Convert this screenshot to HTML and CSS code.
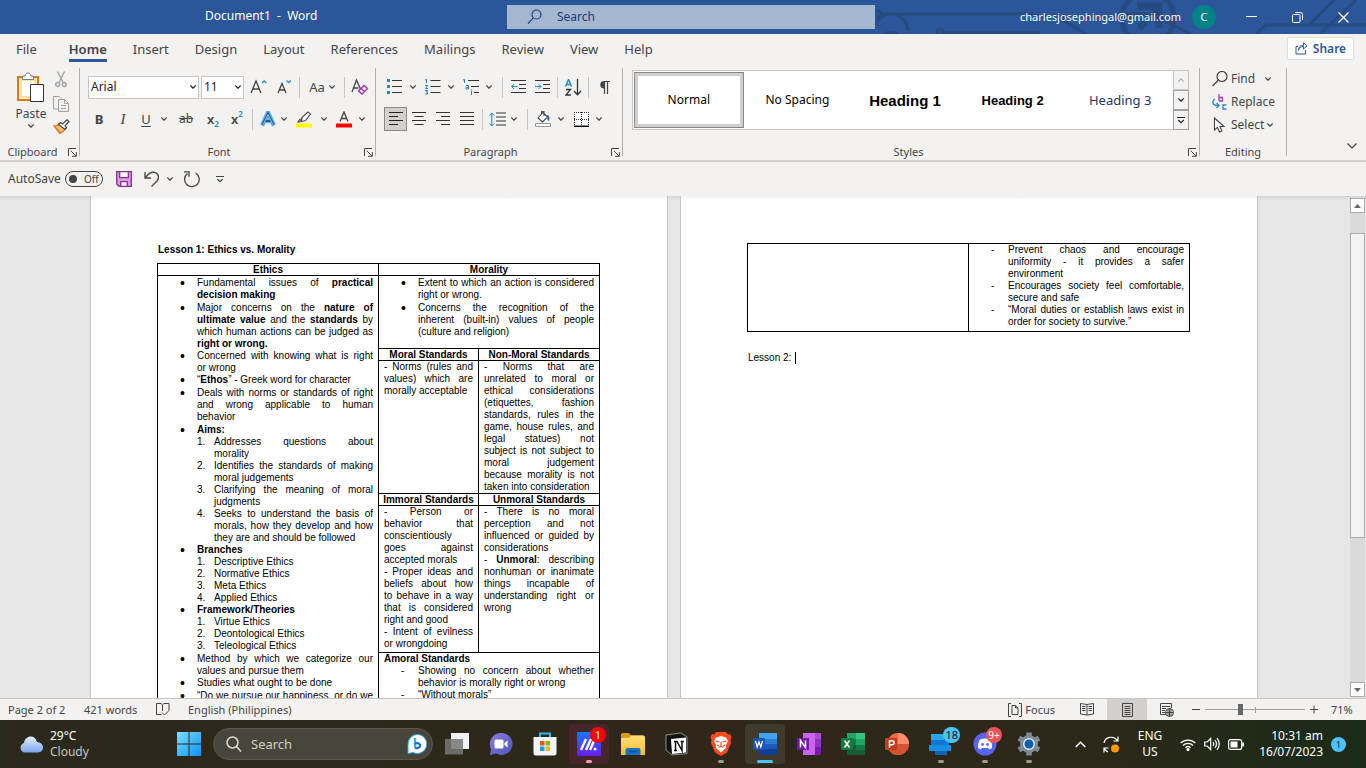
FILE: index.html
```html
<!DOCTYPE html>
<html lang="en">
<head>
<meta charset="utf-8">
<title>Document1 - Word</title>
<link rel="stylesheet" href="styles.css">
</head>
<body>
<svg class="defs" width="0" height="0" aria-hidden="true">
  <symbol id="chev" viewBox="0 0 6 4"><path d="M.3.5 3 3.2 5.7.5" fill="none" stroke="currentColor" stroke-width="1.2"/></symbol>
  <symbol id="launch" viewBox="0 0 9 9"><path d="M.5 8V.5H8M3 3l5 5M8.300 4v4.300H4" fill="none" stroke="currentColor"/></symbol>
  <linearGradient id="gWin" x1="0" y1="0" x2="1" y2="1"><stop offset="0" stop-color="#7fe0ff"/><stop offset="1" stop-color="#0a90f5"/></linearGradient>
  <linearGradient id="gCloud" x1="0" y1="0" x2="0" y2="1"><stop offset="0" stop-color="#e3ecfb"/><stop offset="1" stop-color="#7ba6ec"/></linearGradient>
  <linearGradient id="gFold" x1="0" y1="0" x2="0" y2="1"><stop offset="0" stop-color="#ffe07c"/><stop offset="1" stop-color="#f8bd2a"/></linearGradient>
  <linearGradient id="gChat" x1="0" y1="0" x2="1" y2="1"><stop offset="0" stop-color="#8d7be0"/><stop offset="1" stop-color="#4a56b8"/></linearGradient>
  <linearGradient id="gMu" x1="0" y1="0" x2="0" y2="1"><stop offset="0" stop-color="#1976ff"/><stop offset="1" stop-color="#6a1cf0"/></linearGradient>
</svg>

<header class="titlebar">
  <svg class="circuit" width="490" height="34" viewBox="0 0 490 34" fill="none" stroke="#264b80" stroke-width="3" aria-hidden="true">
    <path d="M4 14h150l12 3h110M68 33h96M32 31a17 17 0 0 0-34 0M8 33h14M176 14l34 20M250 14h25l40 20M380 34l10-9h100M444 34l36-34M434 24l24-24"/><circle cx="2" cy="14" r="3"/><circle cx="64" cy="32" r="3"/><circle cx="272" cy="18" r="26" stroke-width="5"/><path d="M261 6h22v22M263 28l18-18" stroke-width="7"/>
  </svg>
  <h1 class="doc-title">Document1&nbsp; -&nbsp; Word</h1>
  <label class="top-search">
    <svg width="16" height="16" viewBox="0 0 16 16" fill="none" stroke="#1d437c" stroke-width="1.200"><circle cx="9.500" cy="5.500" r="4.500"/><path d="M6.300 8.800 1 14.500"/></svg>
    <input type="search" placeholder="Search" aria-label="Search">
  </label>
  <div class="account"><span>charlesjosephingal@gmail.com</span><span class="avatar">C</span></div>
  <div class="win-buttons">
    <button aria-label="Minimize"><svg width="11" height="11" viewBox="0 0 11 11"><path d="M0 4.500h11" stroke="#fff"/></svg></button>
    <button aria-label="Restore"><svg width="11" height="11" viewBox="0 0 11 11" fill="none" stroke="#fff"><rect x=".5" y="2.500" width="7.500" height="8" rx="1"/><path d="M3 .5h5.500a2 2 0 0 1 2 2V8"/></svg></button>
    <button aria-label="Close"><svg width="11" height="11" viewBox="0 0 11 11" stroke="#fff" stroke-width="1.200"><path d="m.5.5 10 10m0-10-10 10"/></svg></button>
  </div>
</header>

<nav class="tabs">
  <button class="t-file">File</button><button class="on">Home</button><button>Insert</button><button>Design</button><button>Layout</button><button>References</button><button>Mailings</button><button>Review</button><button>View</button><button>Help</button>
  <button class="share"><svg width="13" height="13" viewBox="0 0 13 13" fill="none" stroke="#2b579a"><path d="M3 4.500H1v7.500h9.500V8M3.500 8.500C4 5.500 6 4.500 8.500 4.500V7L12 3.700 8.500.8v2.500C5 3.300 3.500 5.500 3.500 8.500z"/></svg>Share</button>
</nav>

<section class="ribbon">
  <div class="group g-clip">
    <div class="clip-body">
      <button class="paste">
        <svg width="28" height="32" viewBox="0 0 28 32"><path d="M1 5h20v23H1z" fill="#fff" stroke="#e07a10" stroke-width="2"/><path d="M2.500 6.500h17v20h-17z" fill="#fbe3a0"/><path d="M5 9h12v15H5z" fill="#fff"/><path d="M5.500 7.500V4H8c0-4 6-4 6 0h2.500v3.500z" fill="#fff" stroke="#777"/><path d="M13.500 12.500h13v17h-13z" fill="#fff" stroke="#333"/></svg>
        <span>Paste</span><svg width="6" height="4"><use href="#chev"/></svg>
      </button>
      <div class="clip-side">
        <button aria-label="Cut"><svg width="12" height="17" viewBox="0 0 12 17" fill="none" stroke="#a0a0a0" stroke-width="1.300"><path d="m2.500.5 5.500 11M9.500.5 4 11.500"/><circle cx="2.700" cy="13.500" r="2"/><circle cx="9.300" cy="13.500" r="2"/></svg></button>
        <button aria-label="Copy"><svg width="16" height="16" viewBox="0 0 16 16" fill="none" stroke="#a0a0a0"><path d="M5 13H.5V.5h5.500l2 2M5.500 3.500h6l4 4v8h-10zM11.500 3.500v4h4M8 9.500h5M8 12.500h5"/></svg></button>
        <button aria-label="Format Painter"><svg width="17" height="15" viewBox="0 0 17 15"><path d="M1 7c3 0 4-.5 5-2l6 5c-1 2-3 3.500-5 4.500z" fill="#f8c27a" stroke="#e07a10" stroke-width="1.300"/><path d="M5.500 5.500 7.500 3.500 9.500 5 14 .8l2 1.700L12 7l1.500 1.700L12 10.500z" fill="#fff" stroke="#444" stroke-width="1.200"/><path d="m3 9 5 4" stroke="#e07a10"/></svg></button>
      </div>
    </div>
    <div class="g-label"><span>Clipboard</span><button aria-label="Clipboard settings"><svg width="9" height="9"><use href="#launch"/></svg></button></div>
  </div>

  <div class="group g-font">
    <div class="row top">
      <div class="combo c-font"><select aria-label="Font"><option>Arial</option></select><svg width="6" height="4"><use href="#chev"/></svg></div>
      <div class="combo c-size"><select aria-label="Font size"><option>11</option></select><svg width="6" height="4"><use href="#chev"/></svg></div>
      <button class="w26" aria-label="Grow font"><svg width="18" height="18" viewBox="0 0 18 18" fill="none" stroke="#444" stroke-width="1.300"><path d="M1 15 6 3l5 12M3 11h6"/><path d="m12 5 2.200-2.200L16.400 5" stroke="#1f86cf"/></svg></button>
      <button class="w24" aria-label="Shrink font"><svg width="16" height="18" viewBox="0 0 16 18" fill="none" stroke="#444" stroke-width="1.300"><path d="m2 15 4-9.500L10 15M3.500 12h5"/><path d="m10.500 2.500 2.200 2.200 2.200-2.200" stroke="#1f86cf"/></svg></button>
      <i class="sep"></i>
      <button class="w38 aa">Aa<svg width="6" height="4"><use href="#chev"/></svg></button>
      <i class="sep"></i>
      <button class="w24" aria-label="Clear formatting"><svg width="18" height="18" viewBox="0 0 18 18" fill="none" stroke="#444" stroke-width="1.300"><path d="M1 14 5.500 2l4 9M2.500 10h5"/><path d="m7.500 13 5.500-5.500 3.500 3L11 16zM10 10.500l3.500 3" stroke="#9b2fae" fill="#f6e8f8"/></svg></button>
    </div>
    <div class="row">
      <button class="w24 b">B</button><button class="w24 i">I</button><button class="w22 u">U</button><button class="w14" aria-label="Underline style"><svg width="6" height="4"><use href="#chev"/></svg></button>
      <button class="w30 s">ab</button><button class="w24 x">x<sub>2</sub></button><button class="w24 x">x<sup>2</sup></button>
      <i class="sep"></i>
      <button class="w24" aria-label="Text effects"><svg width="16" height="16" viewBox="0 0 16 16" fill="none"><path d="M2 14.500 8 1.500l6 13M4.500 10h7" stroke="#6cb4ea" stroke-width="4.500"/><path d="M2.500 14 8 2.500 13.500 14M5 10h6" stroke="#12609f" stroke-width="2.200"/><path d="M3 14 8 3.500 13 14" stroke="#fff" stroke-width=".6"/></svg></button>
      <button class="w12 nl" aria-label="Text effects menu"><svg width="6" height="4"><use href="#chev"/></svg></button>
      <button class="w28" aria-label="Highlight"><svg width="16" height="17" viewBox="0 0 16 17"><path d="M0 12.500h16v4H0z" fill="#ffff00"/><path d="m6 6.500 6-5.500 2.500 2-5 6.500-4 1zM5.500 7 4 11H2l2-3" fill="#fff" stroke="#555" stroke-width="1.200"/></svg></button>
      <button class="w12" aria-label="Highlight colour"><svg width="6" height="4"><use href="#chev"/></svg></button>
      <button class="w28" aria-label="Font colour"><svg width="16" height="17" viewBox="0 0 16 17"><path d="M0 12.500h16v4H0z" fill="#f00"/><path d="M4 10.500 8 1l4 9.500M5.500 7.500h5" fill="none" stroke="#444" stroke-width="1.300"/></svg></button>
      <button class="w12 nl" aria-label="Font colour menu"><svg width="6" height="4"><use href="#chev"/></svg></button>
    </div>
    <div class="g-label"><span>Font</span><button aria-label="Font settings"><svg width="9" height="9"><use href="#launch"/></svg></button></div>
  </div>

  <div class="group g-para">
    <div class="row top">
      <button class="w24" aria-label="Bullets"><svg width="16" height="16" viewBox="0 0 16 16"><path d="M0 0h3v3H0zM0 6h3v3H0zM0 12h3v3H0z" fill="#1f86cf"/><path d="M5 1.500h10M5 7.500h10M5 13.500h10" stroke="#333"/></svg></button>
      <button class="w12" aria-label="Bullet menu"><svg width="6" height="4"><use href="#chev"/></svg></button>
      <button class="w28" aria-label="Numbering"><svg width="16" height="16" viewBox="0 0 16 16" fill="none"><path d="M0 1l1.500-.6V4M0 6.500h2.500L.5 9.500H3M0 11.500h2.500L1.200 13h1.300v2H0" stroke="#1f86cf"/><path d="M5.500 1.500h10M5.500 7.500h10M5.500 13.500h10" stroke="#333"/></svg></button>
      <button class="w12 nl" aria-label="Numbering menu"><svg width="6" height="4"><use href="#chev"/></svg></button>
      <button class="w28" aria-label="Multilevel list"><svg width="16" height="16" viewBox="0 0 16 16" fill="none"><path d="M0 1l1.500-.6V4M3 6.500h2.500V10H3V8.300h2.500M8.500 12v4M8.500 10.500v1" stroke="#1f86cf"/><path d="M5 1.500h11M8 7.500h8M11 13.500h5" stroke="#333"/></svg></button>
      <button class="w12 nl" aria-label="Multilevel menu"><svg width="6" height="4"><use href="#chev"/></svg></button>
      <i class="sep wide"></i>
      <button class="w24" aria-label="Decrease indent"><svg width="15" height="14" viewBox="0 0 15 14" fill="none"><path d="M0 .5h15M8 4.500h7M8 8.500h7M0 12.500h15" stroke="#333"/><path d="M6.500 6.500h-6M3 4 .7 6.500 3 9" stroke="#1f86cf"/></svg></button>
      <button class="w24" aria-label="Increase indent"><svg width="15" height="14" viewBox="0 0 15 14" fill="none"><path d="M0 .5h15M8 4.500h7M8 8.500h7M0 12.500h15" stroke="#333"/><path d="M0 6.500h6M3.500 4 6 6.500 3.500 9" stroke="#1f86cf"/></svg></button>
      <i class="sep"></i>
      <button class="w24" aria-label="Sort"><svg width="17" height="17" viewBox="0 0 17 17" fill="none"><path d="M.5 7.500 3.500.5l3 7M1.500 5.500h4" stroke="#1f86cf" stroke-width="1.400"/><path d="M1 10.500h4.500L1 16h5M12.500 0v15.500M9 12l3.500 3.800L16 12" stroke="#333" stroke-width="1.300"/></svg></button>
      <i class="sep"></i>
      <button class="w24" aria-label="Show marks"><svg width="11" height="13" viewBox="0 0 11 13"><path d="M5 .5h6M5.500 0v13M8.500 0v13" stroke="#444" stroke-width="1.200"/><path d="M5 0a3.700 3.700 0 0 0 0 7.500z" fill="#444"/></svg></button>
    </div>
    <div class="row">
      <button class="pressed" aria-label="Align left"><svg width="14" height="14" viewBox="0 0 14 14"><path d="M0 .5h14M0 4.500h9M0 8.500h14M0 12.500h9" stroke="#222"/></svg></button>
      <button class="w24" aria-label="Center"><svg width="14" height="14" viewBox="0 0 14 14"><path d="M0 .5h14M2.500 4.500h9M0 8.500h14M2.500 12.500h9" stroke="#333"/></svg></button>
      <button class="w24" aria-label="Align right"><svg width="14" height="14" viewBox="0 0 14 14"><path d="M0 .5h14M5 4.500h9M0 8.500h14M5 12.500h9" stroke="#333"/></svg></button>
      <button class="w24" aria-label="Justify"><svg width="14" height="14" viewBox="0 0 14 14"><path d="M0 .5h14M0 4.500h14M0 8.500h14M0 12.500h14" stroke="#333"/></svg></button>
      <i class="sep"></i>
      <button class="w22" aria-label="Line spacing"><svg width="17" height="15" viewBox="0 0 17 15" fill="none"><path d="M7 1h10M7 5h10M7 9h10M7 13h10" stroke="#333"/><path d="M2.800 1v13M.5 3.500 2.800 1l2.300 2.500M.5 11.500 2.800 14l2.300-2.500" stroke="#1f86cf"/></svg></button>
      <button class="w12" aria-label="Line spacing menu"><svg width="6" height="4"><use href="#chev"/></svg></button>
      <i class="sep wide"></i>
      <button class="w24" aria-label="Shading"><svg width="16" height="16" viewBox="0 0 16 16"><path d="M.5 12.500h15v3H.5z" fill="#fff" stroke="#999"/><path d="m3 7 5-5.500 4.500 4.500-5 5zM6.500 3V.8c0-1 2.500-1 2.500 0V5" fill="#fff" stroke="#444" stroke-width="1.100"/><path d="M11.500 4c3 0 3.500 2 2.500 6-1.500-.5-2-2-1.500-3.500z" fill="#1f6db5"/></svg></button>
      <button class="w12" aria-label="Shading menu"><svg width="6" height="4"><use href="#chev"/></svg></button>
      <button class="w28" aria-label="Borders"><svg width="15" height="15" viewBox="0 0 15 15"><path d="M0 0h15v15H0z" fill="#fff"/><path d="M0 .5h15M.5 0v14M14.500 0v14M7.500 0v14M0 7.500h15" stroke="#333" stroke-dasharray="1 1"/><path d="M0 14.300h15" stroke="#000" stroke-width="1.500"/></svg></button>
      <button class="w12 nl" aria-label="Borders menu"><svg width="6" height="4"><use href="#chev"/></svg></button>
    </div>
    <div class="g-label"><span>Paragraph</span><button aria-label="Paragraph settings"><svg width="9" height="9"><use href="#launch"/></svg></button></div>
  </div>

  <div class="group g-styles">
    <div class="gallery">
      <button class="cell sel">Normal</button><button class="cell">No Spacing</button><button class="cell h1s">Heading 1</button><button class="cell h2s">Heading 2</button><button class="cell h3s">Heading 3</button>
      <div class="g-scroll">
        <button class="off" aria-label="Previous styles"><svg class="flip" width="6" height="4"><use href="#chev"/></svg></button>
        <button aria-label="Next styles"><svg width="6" height="4"><use href="#chev"/></svg></button>
        <button aria-label="More styles"><svg width="8" height="7" viewBox="0 0 8 7"><path d="M0 .5h8M1.300 3 4 5.700 6.700 3" fill="none" stroke="#222" stroke-width="1.200"/></svg></button>
      </div>
    </div>
    <div class="g-label"><span>Styles</span><button aria-label="Styles settings"><svg width="9" height="9"><use href="#launch"/></svg></button></div>
  </div>

  <div class="group g-edit">
    <div class="edit-body">
      <button><svg width="16" height="16" viewBox="0 0 16 16" fill="none" stroke="#444" stroke-width="1.200"><circle cx="10" cy="5.500" r="5"/><path d="M6.500 9 .5 15"/></svg><span class="find">Find</span><svg width="6" height="4"><use href="#chev"/></svg></button>
      <button><svg width="16" height="16" viewBox="0 0 16 16" fill="none" stroke-width="1.300"><path d="M7 0v7M7 3.500h3.500V7H7" stroke="#a33bb5"/><path d="M3 5C-.5 7 0 11.500 6 11.500M4.500 9 7 11.500 4.500 14M14.500 11H11v4h3.500" stroke="#1f86cf"/></svg><span>Replace</span></button>
      <button><svg width="16" height="16" viewBox="0 0 16 16" fill="#fff" stroke="#444" stroke-width="1.100"><path d="M2.500 1v12l3-2.700 2 4.700 2.300-1L8 9.500h4z"/></svg><span>Select</span><svg width="6" height="4"><use href="#chev"/></svg></button>
    </div>
    <div class="g-label"><span>Editing</span></div>
  </div>
  <button class="collapse" aria-label="Collapse ribbon"><svg width="10" height="6" viewBox="0 0 10 6"><path d="m.5.5 4.500 4.500L9.500.5" fill="none" stroke="#444" stroke-width="1.200"/></svg></button>
</section>

<section class="qat">
  <label class="autosave">AutoSave <span class="toggle"><input type="checkbox"><span>Off</span></span></label>
  <button class="w28 q-save" aria-label="Save"><svg width="16" height="16" viewBox="0 0 16 16" fill="#fff" stroke="#8a2a9b" stroke-width="1.300"><path d="M.7.7h14.600v14.600H3L.7 13z" fill="#d9a0e0"/><path d="M3.700.7h8.600v6H3.700zM4.700 15.300v-4.600h6.600v4.600z"/></svg></button>
  <button class="w28" aria-label="Undo"><svg width="16" height="17" viewBox="0 0 16 17" fill="none" stroke="#444" stroke-width="1.300"><path d="M1 1v6h6M1.500 6.500C4 3 7 1 10 1.300c5 .7 5.500 5.700 3 8.700l-5.500 5.500"/></svg></button>
  <button class="w12 nl" aria-label="Undo menu"><svg width="6" height="4"><use href="#chev"/></svg></button>
  <button class="w30" aria-label="Redo"><svg width="17" height="17" viewBox="0 0 17 17" fill="none" stroke="#444" stroke-width="1.300"><path d="M4.500 2.500A7.300 7.300 0 1 0 12.500 2M1 .8h5v5"/></svg></button>
  <button class="w28" aria-label="Customize toolbar"><svg width="8" height="7" viewBox="0 0 8 7"><path d="M0 .5h8M1.300 3 4 5.700 6.700 3" fill="none" stroke="#444" stroke-width="1.200"/></svg></button>
</section>

<main class="canvas">
  <div class="pages">
    <article class="page">
      <h2>Lesson 1: Ethics vs. Morality</h2>
      <table>
        <colgroup><col class="c1"><col class="c2"><col></colgroup>
        <tr class="hd"><th>Ethics</th><th colspan="2">Morality</th></tr>
        <tr class="r-mor">
          <td rowspan="6">
            <ul>
              <li class="sp"><div><p>Fundamental issues of <b>practical</b></p><b>decision making</b></div></li>
              <li><div><p>Major concerns on the <b>nature of</b></p><p><b>ultimate value</b> and the <b>standards</b> by</p><p>which human actions can be judged as</p><b>right or wrong.</b></div></li>
              <li><div><p>Concerned with knowing what is right</p>or wrong</div></li>
              <li class="sp"><div>“<b>Ethos</b>” - Greek word for character</div></li>
              <li class="sp"><div><p>Deals with norms or standards of right</p><p>and wrong applicable to human</p>behavior</div></li>
              <li><div><b>Aims:</b>
                <ol>
                  <li><div><p>Addresses questions about</p>morality</div></li>
                  <li><div><p>Identifies the standards of making</p>moral judgements</div></li>
                  <li><div><p>Clarifying the meaning of moral</p>judgments</div></li>
                  <li><div><p>Seeks to understand the basis of</p><p>morals, how they develop and how</p>they are and should be followed</div></li>
                </ol></div></li>
              <li><div><b>Branches</b>
                <ol><li><div>Descriptive Ethics</div></li><li><div>Normative Ethics</div></li><li><div>Meta Ethics</div></li><li><div>Applied Ethics</div></li></ol></div></li>
              <li class="sp"><div><b>Framework/Theories</b>
                <ol><li><div>Virtue Ethics</div></li><li><div>Deontological Ethics</div></li><li><div>Teleological Ethics</div></li></ol></div></li>
              <li><div><p>Method by which we categorize our</p>values and pursue them</div></li>
              <li class="sp"><div>Studies what ought to be done</div></li>
              <li><div><p>“Do we pursue our happiness, or do we</p></div></li>
            </ul>
          </td>
          <td colspan="2">
            <ul>
              <li class="sp"><div><p>Extent to which an action is considered</p>right or wrong.</div></li>
              <li><div><p>Concerns the recognition of the</p><p>inherent (built-in) values of people</p>(culture and religion)</div></li>
            </ul>
          </td>
        </tr>
        <tr class="hd"><th>Moral Standards</th><th>Non-Moral Standards</th></tr>
        <tr class="r-norm">
          <td><p>- Norms (rules and</p><p>values) which are</p>morally acceptable</td>
          <td><p>- Norms that are</p><p>unrelated to moral or</p><p>ethical considerations</p><p>(etiquettes, fashion</p><p>standards, rules in the</p><p>game, house rules, and</p><p>legal statues) not</p><p>subject is not subject to</p><p>moral judgement</p><p>because morality is not</p>taken into consideration</td>
        </tr>
        <tr class="hd"><th>Immoral Standards</th><th>Unmoral Standards</th></tr>
        <tr class="r-imm">
          <td><p>- Person or</p><p>behavior that</p>conscientiously<p>goes against</p>accepted morals<p>- Proper ideas and</p><p>beliefs about how</p><p>to behave in a way</p><p>that is considered</p>right and good<p>- Intent of evilness</p>or wrongdoing</td>
          <td><p>- There is no moral</p><p>perception and not</p><p>influenced or guided by</p>considerations<p>- <b>Unmoral</b>: describing</p><p>nonhuman or inanimate</p><p>things incapable of</p><p>understanding right or</p>wrong</td>
        </tr>
        <tr class="r-amo">
          <td colspan="2"><b>Amoral Standards</b>
            <ul class="dash">
              <li><div><p>Showing no concern about whether</p>behavior is morally right or wrong</div></li>
              <li><div>“Without morals”</div></li>
            </ul>
          </td>
        </tr>
      </table>
    </article>
    <article class="page second">
      <table>
        <colgroup><col class="c1"><col></colgroup>
        <tr class="r-p2"><td></td><td>
          <ul class="dash">
            <li><div><p>Prevent chaos and encourage</p><p>uniformity - it provides a safer</p>environment</div></li>
            <li><div><p>Encourages society feel comfortable,</p>secure and safe</div></li>
            <li><div><p>“Moral duties or establish laws exist in</p>order for society to survive.”</div></li>
          </ul>
        </td></tr>
      </table>
      <div class="lesson2">Lesson 2: <i class="caret"></i></div>
    </article>
  </div>
  <div class="scrollbar">
    <button aria-label="Scroll up"><svg width="7" height="4" viewBox="0 0 7 4"><path d="M0 4 3.500 0 7 4z" fill="#666"/></svg></button>
    <div class="track"><div class="thumb"></div></div>
    <button aria-label="Scroll down"><svg width="7" height="4" viewBox="0 0 7 4"><path d="M0 0 3.500 4 7 0z" fill="#666"/></svg></button>
  </div>
</main>

<footer class="status">
  <span class="st-page">Page 2 of 2</span><span class="st-words">421 words</span>
  <svg class="st-book" width="14" height="13" viewBox="0 0 14 13" fill="none" stroke="#444"><path d="M5.500 11.500h-5V.5H5l1.500 1.300L8 .5h5v7M6.500 2v6M6 9.500l2.500 2.500 4.500-4.500"/></svg>
  <span>English (Philippines)</span>
  <div class="st-right">
    <button class="focus"><svg width="14" height="14" viewBox="0 0 14 14" fill="none" stroke="#444"><path d="M3 .5H.5v13H3M11 .5h2.500v13H11M4 2.500h3.500l2.500 2.500v6.500H4zM7.500 2.500V5H10"/></svg>Focus</button>
    <button class="vw" aria-label="Read mode"><svg width="14" height="13" viewBox="0 0 14 13" fill="none" stroke="#444"><path d="M7 1.500.5.5v10.500l6.500 1 6.500-1V.5zM7 1.500V12M2 3.500h3.500M2 5.500h3.500M2 7.500h3.500M8.500 3.500H12M8.500 5.500H12M8.500 7.500H12"/></svg></button>
    <button class="vw cur" aria-label="Print layout"><svg width="11" height="14" viewBox="0 0 11 14" fill="none" stroke="#444"><path d="M.5.5h10v13H.5zM2.500 3.500h6M2.500 5.500h6M2.500 7.500h6M2.500 9.500h6M2.500 11.500h6"/></svg></button>
    <button class="vw" aria-label="Web layout"><svg width="14" height="14" viewBox="0 0 14 14" fill="none" stroke="#444"><path d="M6 11.500H.5V.5h11V5M2 3.500h8M2 5.500h4M2 7.500h3M2 9.500h3"/><circle cx="9.500" cy="9.500" r="4"/><path d="M5.500 9.500h8M9.500 5.500v8M8 6v7M11 6v7"/></svg></button>
    <button class="zb" aria-label="Zoom out"><svg width="8" height="9"><path d="M0 4.500h8" stroke="#444"/></svg></button>
    <input class="zoom" type="range" min="0" max="100" value="35" aria-label="Zoom">
    <button class="zb" aria-label="Zoom in"><svg width="8" height="9"><path d="M0 4.500h8M4 .5v8" stroke="#444"/></svg></button>
    <span class="pct">71%</span>
  </div>
</footer>

<footer class="taskbar">
  <button class="weather"><svg width="24" height="17" viewBox="0 0 24 17"><path d="M5 16.500a5 5 0 0 1 0-9.500C6-1 16-2 18 6c8 .5 8 10.500 1 10.500z" fill="url(#gCloud)"/></svg><span>29°C<br><em>Cloudy</em></span></button>
  <button class="start" aria-label="Start"><svg width="24" height="24" viewBox="0 0 24 24"><path d="M0 0h11.500v11.500H0zM12.500 0H24v11.500H12.500zM0 12.500h11.500V24H0zM12.500 12.500H24V24H12.500z" fill="url(#gWin)"/></svg></button>
  <label class="tb-search"><svg width="16" height="16" viewBox="0 0 16 16" fill="none" stroke="#ddd" stroke-width="1.500"><circle cx="6.500" cy="6.500" r="5.500"/><path d="m10.500 10.500 4.500 5"/></svg><input type="search" placeholder="Search" aria-label="Taskbar search">
    <svg width="20" height="20" viewBox="0 0 20 20"><path d="M10 .5a9.500 9.500 0 1 1-4 18L1 19.500V10A9.500 9.500 0 0 1 10 .5z" fill="#fff" stroke="#2aa6ee"/><path d="M8 4v9.500" fill="none" stroke="#35b4f5" stroke-width="2.400"/><path d="M8 9.500c3.500-1 5.500.5 5 2.500-.500 2-3.500 3-5 1.500" fill="none" stroke="#1668dc" stroke-width="2.200"/></svg></label>
  <div class="apps">
    <button aria-label="Task view"><svg width="24" height="22" viewBox="0 0 24 22"><path d="M6 0h18v16H6z" fill="#f2f2f2"/><path d="M0 6h18v15.500H0z" fill="#777" opacity=".85"/></svg></button>
    <button aria-label="Chat"><svg width="24" height="24" viewBox="0 0 24 24"><path d="M12 1a11 11 0 1 1-5 20.500L1 23l1-6A11 11 0 0 1 12 1z" fill="url(#gChat)"/><rect x="5.500" y="7.500" width="9" height="9" rx="1.500" fill="#fff"/><path d="m15.500 11 3-2.500v7l-3-2.500z" fill="#fff"/></svg></button>
    <button aria-label="Store"><svg width="24" height="24" viewBox="0 0 24 24"><path d="M7 6V1.500h10V6" fill="none" stroke="#35b4f2" stroke-width="2"/><path d="M.5 5h23v16a2.500 2.500 0 0 1-2.500 2.500H3A2.500 2.500 0 0 1 .5 21z" fill="#f5f5f5"/><path d="M7 9h4.500v4.500H7z" fill="#f04f23"/><path d="M12.500 9H17v4.500h-4.500z" fill="#80b900"/><path d="M7 14.500h4.500V19H7z" fill="#05a3ee"/><path d="M12.500 14.500H17V19h-4.500z" fill="#ffb803"/></svg></button>
    <button class="alert" aria-label="Mailer"><svg width="24" height="24" viewBox="0 0 24 24"><path d="M0 0h24v24H0z" fill="url(#gMu)"/><path d="m4 18 5-11M9 18l5-11M13 18l4-9" fill="none" stroke="#fff" stroke-width="2.400"/><circle cx="18" cy="17" r="1.500" fill="#fff"/></svg><span class="badge red">1</span><i class="dot pink"></i></button>
    <button aria-label="Files"><svg width="24" height="22" viewBox="0 0 24 22"><path d="M0 1.500Q0 0 1.500 0H8l2 2.500h12.500L24 4v4H0z" fill="#dc9a16"/><path d="M0 5h8l2-2.500h12.500L24 4v18H0z" fill="url(#gFold)"/><path d="M4.500 22v-5q0-2 2-2h11q2 0 2 2v5z" fill="#1373c4"/><path d="M8 18.500h8" stroke="#0b4f93" stroke-width="1.500"/></svg></button>
    <button aria-label="Notion"><svg width="24" height="24" viewBox="0 0 24 24"><path d="m1 3 15-2 6 4v16.500L7 23l-6-5z" fill="#111" stroke="#ddd" stroke-width=".6"/><path d="m6 7 15-1.500v15L7 22z" fill="#fff"/><path d="M9 9.500h3l5 9V9.500M10.500 9.500v9M15.500 9.500h3.500M9 18.500h3" fill="none" stroke="#111" stroke-width="1.500"/></svg></button>
    <button aria-label="Brave"><svg width="22" height="24" viewBox="0 0 22 24"><path d="m6 0-2 2.500L2 2 .5 5l1 3L1 11l4 9.500 6 3.500 6-3.500L21 11l-.500-3 1-3L20 2l-2 .5L16 0z" fill="#fb4a1d"/><path d="M6 5.500 11 4l5 1.500L18 9l-2 4v3l-5 4.500L6 16v-3L4 9z" fill="#fff"/><path d="m5.500 9 4 1M16.500 9l-4 1M11 10v4m-2 1.500 2-1.500 2 1.500M7 13l2 1m6-1-2 1" stroke="#fb4a1d" stroke-width="1.200" fill="none"/></svg><i class="dot"></i></button>
    <button class="active" aria-label="Word"><svg width="24" height="22" viewBox="0 0 24 22"><path d="M6 0h18v6H6z" fill="#41a5ee"/><path d="M6 6h18v5H6z" fill="#2b7cd3"/><path d="M6 11h18v5H6z" fill="#185abd"/><path d="M6 16h18v6H6z" fill="#103f91"/><path d="M0 5h12v12H0z" fill="#1b56b0"/><path d="m2.500 8 1.700 6L6 9l1.800 5 1.700-6" fill="none" stroke="#fff" stroke-width="1.300"/></svg><i class="dot blue"></i></button>
    <button aria-label="OneNote"><svg width="24" height="22" viewBox="0 0 24 22"><path d="M6 0h18v22H6z" fill="#ca64ea"/><path d="M18 0h6v6h-6z" fill="#ae4bd5"/><path d="M18 6h6v8h-6z" fill="#9332bf"/><path d="M18 14h6v8h-6z" fill="#7719aa"/><path d="M0 5h12v12H0z" fill="#7719aa"/><path d="M3.500 14.500v-7l5 7v-7" fill="none" stroke="#fff" stroke-width="1.500"/></svg></button>
    <button aria-label="Excel"><svg width="24" height="22" viewBox="0 0 24 22"><path d="M6 0h9v6H6z" fill="#21a366"/><path d="M15 0h9v6h-9z" fill="#33c481"/><path d="M6 6h18v6H6z" fill="#107c41"/><path d="M15 6h9v6h-9z" fill="#21a366"/><path d="M6 12h18v10H6z" fill="#185c37"/><path d="M15 12h9v5h-9z" fill="#107c41"/><path d="M0 5h12v12H0z" fill="#107c41"/><path d="m3.500 7.500 5 7m0-7-5 7" stroke="#fff" stroke-width="1.500"/></svg></button>
    <button aria-label="PowerPoint"><svg width="24" height="22" viewBox="0 0 24 22"><circle cx="13" cy="11" r="11" fill="#ed6c47"/><path d="M13 0a11 11 0 0 1 11 11H13z" fill="#ff8f6b"/><path d="M2 11h22a11 11 0 0 1-22 0z" fill="#d35230"/><path d="M0 5h12v12H0z" fill="#c43e1c"/><path d="M4.500 15V7.800H7q2 0 2 2t-2 2H4.500" fill="none" stroke="#fff" stroke-width="1.500"/></svg></button>
    <button aria-label="Phone Link"><svg width="24" height="22" viewBox="0 0 24 22"><path d="M2 1h13v16H2z" fill="#28a8ea"/><path d="M2 7h18v10H2z" fill="#0f78d4"/><path d="M0 12h22v6H0z" fill="#1490df"/><path d="M6 18h12v4H6z" fill="#0a63b5"/></svg><span class="badge blue">18</span><i class="dot"></i></button>
    <button aria-label="Discord"><svg width="24" height="24" viewBox="0 0 24 24"><circle cx="12" cy="12" r="11.500" fill="#5865f2"/><path d="M7 7.500Q12 5.500 17 7.500q2.500 4 2 8.500l-3 1.500-1-1.500H9l-1 1.500L5 16q-.5-4.500 2-8.500z" fill="#fff"/><circle cx="9.500" cy="12.500" r="1.400" fill="#5865f2"/><circle cx="14.500" cy="12.500" r="1.400" fill="#5865f2"/></svg><span class="badge coral">9+</span><i class="dot"></i></button>
    <button aria-label="Settings"><svg width="24" height="24" viewBox="0 0 24 24"><circle cx="12" cy="12" r="9" fill="#7f8c97"/><g stroke="#7f8c97" stroke-width="5.500"><path d="M12 .5v23M2 6.200l20 11.600M22 6.200 2 17.800"/></g><circle cx="12" cy="12" r="6" fill="#dfe7ee"/><circle cx="12" cy="12" r="4.500" fill="#0a5fb4"/></svg><i class="dot"></i></button>
  </div>
  <div class="tray">
    <button class="up" aria-label="Hidden icons"><svg width="11" height="7" viewBox="0 0 11 7"><path d="m.7 6 4.800-4.800L10.300 6" fill="none" stroke="#fff" stroke-width="1.500"/></svg></button>
    <button class="sync" aria-label="Updates"><svg width="17" height="17" viewBox="0 0 17 17" fill="none" stroke="#fff" stroke-width="1.200"><path d="M1 7C2 1 10-1 14.500 4.500M15 .5v4.500h-4.500M5 16C3 15 2 14 1.500 12.500M1 16.500V12h4.500"/><circle cx="12" cy="12.500" r="4" fill="#f90" stroke="none"/></svg></button>
    <span class="lang">ENG<br>US</span>
    <div class="sys">
      <svg width="16" height="13" viewBox="0 0 16 13" fill="none" stroke="#fff" stroke-width="1.200"><path d="M.7 5a10.500 10.500 0 0 1 14.600 0M3 7.500a7 7 0 0 1 10 0M5.500 9.700a3.600 3.600 0 0 1 5 0"/><circle cx="8" cy="11.500" r="1" fill="#fff"/></svg>
      <svg width="16" height="14" viewBox="0 0 16 14" fill="none" stroke="#fff" stroke-width="1.200"><path d="M.7 5v4h2.500l3.500 3.500v-11L3.200 5zM9 5q1.500 2 0 4M11 3q3 4 0 8M13 1.200q4.500 5.800 0 11.600"/></svg>
      <svg width="16" height="11" viewBox="0 0 16 11"><rect x=".6" y=".6" width="13" height="9.800" rx="2" fill="none" stroke="#fff" stroke-width="1.200"/><path d="M2.500 2.500h7v6h-7zM14.300 3.500H16v4h-1.700z" fill="#fff"/></svg>
    </div>
    <span class="clock">10:31 am<br>16/07/2023</span>
    <span class="note">1</span>
  </div>
</footer>
</body>
</html>
```
FILE: styles.css
```css
* { box-sizing: border-box; }
body {
  margin: 0;
  height: 100vh;
  display: flex;
  flex-direction: column;
  overflow: hidden;
  font: 12px/16px "Noto Sans", sans-serif;
  color: #444;
  background: #f3f2f1;
}
button, input, select { font: inherit; color: inherit; }
button {
  border: 0;
  padding: 0;
  background: none;
  display: flex;
  align-items: center;
  justify-content: center;
}
svg { flex: none; display: block; }
.defs { position: absolute; }

/* title bar */
.titlebar {
  position: relative;
  flex: none;
  height: 34px;
  display: flex;
  align-items: center;
  background: #2b579a;
  color: #fff;
}
.circuit { position: absolute; right: 0; top: 0; }
.doc-title {
  position: relative;
  margin: 0;
  width: 507px;
  padding: 0 0 2px 205px;
  font-size: 12px;
  font-weight: 400;
}
.top-search {
  position: relative;
  width: 368px;
  height: 24px;
  padding-left: 20px;
  display: flex;
  align-items: center;
  gap: 14px;
  background: #a4b7d1;
}
.top-search input {
  flex: 1;
  min-width: 0;
  border: 0;
  padding: 0;
  background: none;
  color: #1d3a6d;
}
.top-search input::placeholder { color: #1d3a6d; opacity: 1; }
.account {
  position: relative;
  margin-left: auto;
  display: flex;
  align-items: center;
  gap: 11px;
  font-size: 11px;
}
.avatar {
  width: 24px;
  height: 24px;
  border-radius: 50%;
  background: #038387;
  text-align: center;
  line-height: 24px;
}
.win-buttons { position: relative; display: flex; margin-left: 12px; }
.win-buttons button { width: 46px; height: 32px; }

/* tabs */
.tabs {
  flex: none;
  height: 31px;
  padding: 0 12px 2px 16px;
  display: flex;
  align-items: center;
  gap: 26px;
  font-size: 13px;
}
.tabs button { height: 26px; border-bottom: 3px solid transparent; border-top: 3px solid transparent; }
.tabs .t-file { margin-right: 6px; }
.tabs .on { font-weight: 600; border-bottom-color: #2b579a; }
.tabs .share {
  margin-left: auto;
  width: 67px;
  height: 23px;
  gap: 5px;
  border: 1px solid #e1dfdd;
  border-radius: 2px;
  background: #fff;
  color: #2b579a;
  font-size: 12px;
  font-weight: 600;
}

/* ribbon */
.ribbon {
  flex: none;
  height: 97px;
  display: flex;
  border-bottom: 2px solid #d2d0ce;
}
.group {
  display: flex;
  flex-direction: column;
  margin: 3px 0 4px;
  padding-top: 3px;
  border-right: 1px solid #b3b0ad;
}
.g-clip { width: 80px; }
.g-font { width: 296px; padding-left: 7px; }
.g-para { width: 247px; padding-left: 7px; }
.g-styles { flex: 1; min-width: 300px; padding: 2px 10px 0 9px; }
.g-edit { width: 87px; padding-left: 12px; }
.g-label {
  margin: auto 0 -4px;
  height: 16px;
  display: flex;
  align-items: center;
  font-size: 11px;
}
.g-label span { flex: 1; text-align: center; }
.g-font .g-label span, .g-para .g-label span { padding-right: 10px; }
.g-label button { width: 14px; height: 14px; }
.g-styles .g-label { margin-right: -10px; }
.g-edit .g-label { margin-left: -12px; }
.row { display: flex; align-items: center; height: 32px; }
.row button { height: 24px; }
.w12 { width: 12px; }
.w14 { width: 14px; }
.w22 { width: 22px; }
.w24 { width: 24px; }
.w26 { width: 26px; }
.w28 { width: 28px; }
.w30 { width: 30px; }
.w38 { width: 38px; }
.sep { width: 1px; height: 21px; margin: 0 3px; background: #c8c6c4; }
.sep.wide { margin-left: 7px; }

.clip-body { display: flex; height: 64px; }
.paste { width: 58px; flex-direction: column; gap: 3px; padding: 0 0 6px 4px; }
.paste span { line-height: 14px; }
.clip-side { display: flex; flex-direction: column; justify-content: space-between; width: 6px; padding-bottom: 1px; align-items: center; }

.combo { display: grid; align-items: center; margin-left: 1px; }
.combo > * { grid-area: 1 / 1; }
.combo svg { justify-self: end; margin-right: 3px; color: #222; pointer-events: none; }
.combo select {
  appearance: none;
  width: 100%;
  height: 23px;
  border: 1px solid #c8c6c4;
  border-radius: 0;
  background: #fff;
  padding: 0 2px;
  color: #222;
}
.c-font { width: 111px; }
.c-size { width: 43px; margin: 0 2px; }
.aa { gap: 4px; font-size: 13px; }
.b { font-weight: 700; font-size: 13px; }
.i { font: italic 15px "Liberation Serif", serif; }
.u { text-decoration: underline; font-size: 13px; text-underline-offset: 2px; }
.s { text-decoration: line-through; font-size: 12px; }
.x { font-weight: 600; font-size: 13px; }
.x sub, .x sup { font-size: 8px; color: #1f86cf; }
.x sub { padding-top: 10px; }
.x sup { padding-bottom: 10px; }
.nl { margin-left: -2px; }
.pressed { width: 23px; margin-left: 1px; border: 1px solid #8a8886; background: #d2d0ce; }

.gallery {
  height: 60px;
  display: flex;
  border: 1px solid #c8c6c4;
  background: #fff;
}
.cell {
  flex: 1;
  margin: 1px 0;
  color: #000;
  font-size: 12px;
}
.cell.sel { margin-left: 1px; border: 1px solid #8a8886; box-shadow: inset 0 0 0 3px #d2d0ce; }
.cell.h1s { font: 700 15px "Liberation Sans", sans-serif; }
.cell.h2s { font: 700 13px "Liberation Sans", sans-serif; }
.cell.h3s { color: #1f3763; font-size: 13px; }
.g-scroll { width: 16px; display: flex; flex-direction: column; margin: -1px; }
.g-scroll button { flex: 1; border: 1px solid #a19f9d; color: #222; background: #f3f2f1; }
.g-scroll .off { color: #b3b0ad; border-color: #c8c6c4; }
.flip { transform: scaleY(-1); }

.edit-body { display: flex; flex-direction: column; align-items: flex-start; gap: 7px; }
.edit-body button { gap: 3px; height: 16px; }
.find { margin-right: 7px; }
.collapse { margin: auto 9px 11px 60px; }

/* quick access */
.qat {
  flex: none;
  height: 34px;
  padding-left: 8px;
  display: flex;
  align-items: center;
}
.autosave { display: flex; align-items: center; gap: 4px; width: 102px; }
.toggle {
  width: 38px;
  height: 16px;
  display: flex;
  align-items: center;
  gap: 7px;
  padding-left: 3px;
  border: 1px solid #444;
  border-radius: 8px;
  font-size: 10px;
}
.toggle input {
  appearance: none;
  margin: 0;
  width: 8px;
  height: 8px;
  border-radius: 50%;
  background: #444;
}

/* document area */
.canvas {
  flex: 1;
  min-height: 0;
  display: flex;
  background: linear-gradient(#d4d4d4, #e6e6e6 4px);
}
.pages {
  flex: 1;
  min-width: 0;
  display: flex;
  justify-content: center;
  gap: 12px;
  overflow: hidden;
}
.page {
  flex: none;
  width: 578px;
  padding: 48px 67px 0 66px;
  border: solid #c6c6c6;
  border-width: 0 1px;
  background: linear-gradient(#f0f0f0, #fff 4px);
  color: #000;
  font: 10px/12px "Liberation Sans", Arial, sans-serif;
}
.page.second { padding-top: 47px; }
.page h2 { margin: 0 0 7px 1px; font-size: 10px; }
.page p { margin: 0; text-align: justify; text-align-last: justify; }
.page table { width: 443px; table-layout: fixed; border-collapse: collapse; }
.c1 { width: 221px; }
.c2 { width: 100px; }
.page td, .page th { border: 1px solid #000; padding: 0 5px 0 5px; vertical-align: top; white-space: nowrap; }
.hd { height: 12px; }
.page th { line-height: 11px; padding: 0; }
.r-mor { height: 73px; }
.r-norm { height: 132px; }
.r-imm { height: 147px; }
.r-amo { height: 200px; }
.r-p2 { height: 88px; }
.page ul, .page ol { list-style: none; margin: 0; padding: 0; }
.page ul { padding: 1px 0 0 17px; }
.page ul.dash { padding-top: 0; }
.page li { display: grid; grid-template-columns: 17px minmax(0, 1fr); }
.page ul > li::before { content: "•"; height: 12px; font-size: 14px; }
.page ul.dash > li::before { content: "-"; font-size: 10px; }
.page ol { counter-reset: n; }
.page ol > li { counter-increment: n; }
.page ol > li::before { content: counter(n) "."; }
.page .sp { padding-bottom: 1px; }
.lesson2 { margin: 20px 0 0 1px; display: flex; gap: 4px; }
.caret { width: 1px; height: 12px; background: #000; }

.scrollbar {
  width: 18px;
  padding: 2px 1px 1px 2px;
  display: flex;
  flex-direction: column;
}
.scrollbar button { height: 15px; background: #fff; border: 1px solid #ababab; }
.track { flex: 1; padding-top: 20px; background: #dadada; }
.thumb { height: 68%; background: #f3f3f3; border: 1px solid #ababab; }

/* status bar */
.status {
  flex: none;
  height: 22px;
  padding-left: 8px;
  display: flex;
  align-items: center;
  border-top: 1px solid #c8c6c4;
  font-size: 11px;
}
.st-page { width: 76px; }
.st-words { width: 72px; }
.st-book { margin-right: 18px; }
.st-right { margin-left: auto; display: flex; align-items: center; height: 100%; }
.focus { gap: 3px; margin-right: 12px; }
.vw { width: 40px; height: 100%; }
.cur { background: #d2d0ce; }
.zb { width: 18px; }
.zoom {
  appearance: none;
  width: 100px;
  height: 12px;
  margin: 0;
  background:
    linear-gradient(#a19f9d, #a19f9d) 50% 50% / 1px 6px no-repeat,
    linear-gradient(#a19f9d, #a19f9d) 0 50% / 100% 1px no-repeat;
}
.zoom::-webkit-slider-thumb { appearance: none; width: 5px; height: 11px; background: #666; }
.pct { width: 43px; padding-left: 8px; }

/* taskbar */
.taskbar {
  flex: none;
  height: 48px;
  display: flex;
  align-items: center;
  background: linear-gradient(90deg, #2b291c, #2f2719 55%, #2c2819 80%, #1a2b17);
  color: #fff;
}
.weather { width: 164px; padding-left: 19px; justify-content: flex-start; gap: 7px; text-align: left; }
.weather em { font-style: normal; color: #c8c6c0; }
.start { width: 49px; height: 44px; }
.tb-search {
  width: 220px;
  height: 32px;
  padding: 0 5px 0 12px;
  display: flex;
  align-items: center;
  gap: 9px;
  border: 1px solid #5b574b;
  border-radius: 16px;
  background: #48453b;
}
.tb-search input { flex: 1; min-width: 0; padding: 0; border: 0; background: none; font-size: 13px; }
.tb-search input::placeholder { color: #d0cec8; opacity: 1; }
.apps { display: flex; margin-left: 2px; }
.apps button { position: relative; width: 40px; height: 40px; margin: 0 2px; border-radius: 4px; }
.apps .active { background: #403a2d; }
.apps .alert { background: #46262a; }
.dot { position: absolute; bottom: 1px; left: 17px; width: 6px; height: 3px; border-radius: 2px; background: #a09c92; }
.dot.pink { background: #f99aa4; }
.dot.blue { left: 12px; width: 16px; background: #4cc2ff; }
.badge {
  position: absolute;
  top: 3px;
  right: 3px;
  min-width: 16px;
  height: 16px;
  padding: 0 2px;
  border-radius: 8px;
  font-size: 11px;
  line-height: 16px;
  text-align: center;
}
.badge.red { background: #f00; }
.badge.blue { background: #4cc2ff; color: #111; right: 1px; }
.badge.coral { background: #f0525a; font-size: 10px; }
.tray { margin-left: auto; display: flex; align-items: center; }
.up { width: 32px; height: 40px; }
.sync { width: 30px; height: 40px; }
.lang { width: 48px; text-align: center; }
.sys { display: flex; align-items: center; gap: 8px; padding-left: 6px; }
.clock { width: 79px; text-align: right; }
.note {
  margin: 0 20px 0 8px;
  width: 15px;
  height: 15px;
  border-radius: 50%;
  background: #4cc2ff;
  color: #111;
  font-size: 9px;
  line-height: 15px;
  text-align: center;
}
```
